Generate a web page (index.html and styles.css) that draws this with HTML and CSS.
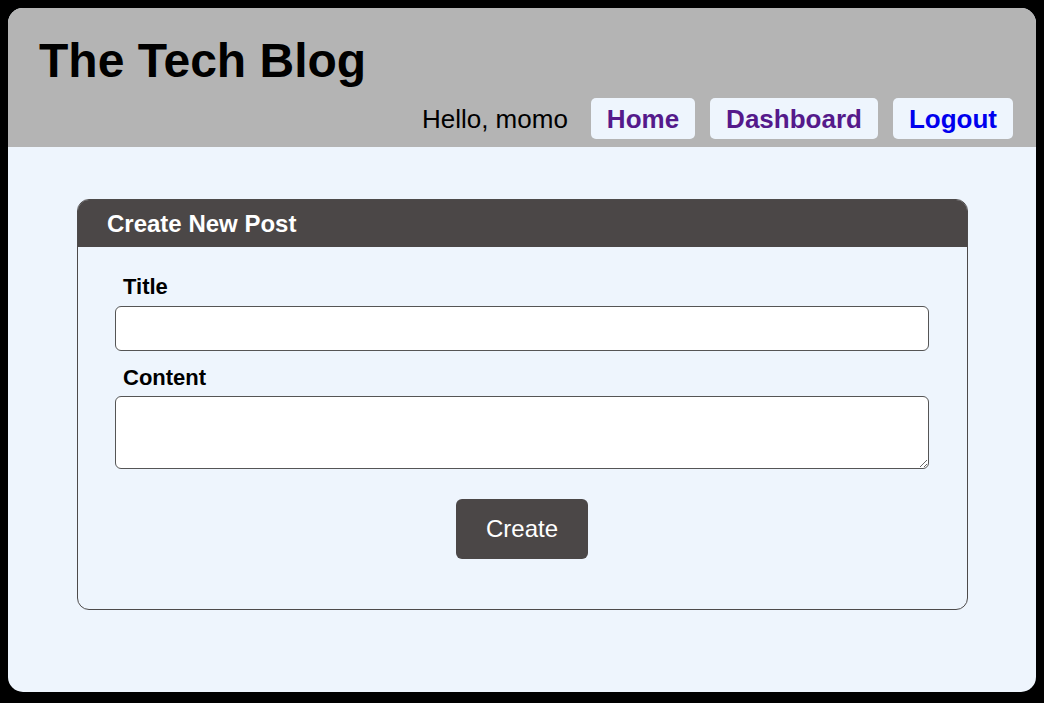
FILE: index.html
```html
<!DOCTYPE html>
<html lang="en">
<head>
<meta charset="utf-8">
<title>The Tech Blog</title>
<link rel="stylesheet" href="styles.css">
</head>
<body>
<div class="page">
  <header class="site-header">
    <h1 class="site-title">The Tech Blog</h1>
    <nav class="nav">
      <span class="greeting">Hello, momo</span>
      <a class="nav-btn visited" href="#">Home</a>
      <a class="nav-btn visited" href="#">Dashboard</a>
      <a class="nav-btn link" href="#">Logout</a>
    </nav>
  </header>
  <main class="main">
    <section class="card">
      <div class="card-header">
        <h2 class="card-title">Create New Post</h2>
      </div>
      <form class="card-body">
        <label class="field-label" for="title">Title</label>
        <input class="field-input" id="title" type="text">
        <label class="field-label label-content" for="content">Content</label>
        <textarea class="field-textarea" id="content"></textarea>
        <div class="actions">
          <button class="btn-create" type="button">Create</button>
        </div>
      </form>
    </section>
  </main>
</div>
</body>
</html>
```

FILE: styles.css
```css
* { box-sizing: border-box; }

html, body {
  margin: 0;
  padding: 0;
  background: #000;
  font-family: "Liberation Sans", Arial, sans-serif;
}

body {
  padding: 8px;
}

.page {
  height: 684px;
  border-radius: 15px;
  overflow: hidden;
  background: #eef5fd;
  display: flex;
  flex-direction: column;
}

.site-header {
  background: #b4b4b4;
  padding: 25px 23px 8px 31px;
  display: flex;
  flex-direction: column;
}

.site-title {
  margin: 0;
  font-size: 48px;
  font-weight: bold;
  line-height: normal;
  color: #000;
}

.nav {
  margin-top: 10px;
  display: flex;
  justify-content: flex-end;
  align-items: center;
  gap: 15px;
}

.greeting {
  font-size: 26px;
  color: #000;
  margin-right: 8px;
  padding-top: 2px;
}

.nav-btn {
  display: block;
  background: #eef5fd;
  border-radius: 5px;
  padding: 6px 16px 5px;
  font-size: 26px;
  font-weight: bold;
  line-height: 30px;
  text-decoration: none;
}

.nav-btn.visited { color: #551a8b; }
.nav-btn.link { color: #0000ee; }

.main {
  padding: 52px 68px 0 69px;
}

.card {
  border: 1px solid #4d4a4a;
  border-radius: 12px;
  overflow: hidden;
}

.card-header {
  background: #4b4747;
  padding: 10px 29px 9px;
}

.card-title {
  margin: 0;
  color: #fff;
  font-size: 24px;
  font-weight: bold;
  line-height: normal;
}

.card-body {
  padding: 27px 38px 50px 37px;
  display: flex;
  flex-direction: column;
}

.field-label {
  display: block;
  padding-left: 8px;
  font-size: 22px;
  font-weight: bold;
  line-height: normal;
  color: #000;
  margin-bottom: 6px;
}

.label-content {
  margin-top: 14px;
  margin-bottom: 5px;
}

.field-input,
.field-textarea {
  display: block;
  width: 100%;
  margin: 0;
  border: 1px solid #555;
  border-radius: 6px;
  background: #fff;
  font-family: "Liberation Sans", Arial, sans-serif;
  font-size: 16px;
}

.field-input {
  height: 45px;
}

.field-textarea {
  height: 73px;
}

.actions {
  margin-top: 30px;
  display: flex;
  justify-content: center;
}

.btn-create {
  height: 60px;
  padding: 0 30px;
  border: none;
  border-radius: 6px;
  background: #4b4747;
  color: #fff;
  font-family: "Liberation Sans", Arial, sans-serif;
  font-size: 24px;
}
```
